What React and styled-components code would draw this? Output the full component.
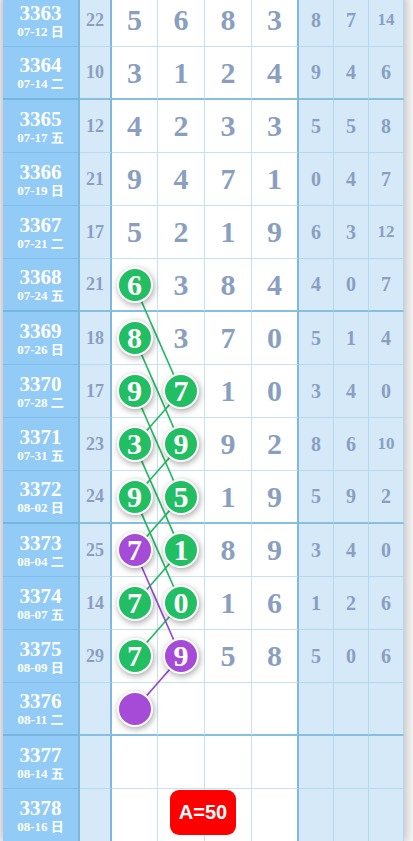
import React from "react";
import styled, { createGlobalStyle } from "styled-components";

const ROW_H = 53;
const COLS = [77, 32, 46, 47, 47, 47, 35, 35, 35];

const GlobalStyle = createGlobalStyle`
  html, body {
    margin: 0;
    padding: 0;
    background: #f4f4f4;
    overflow: hidden;
  }
  body {
    font-family: "Liberation Serif", "Noto Sans CJK SC", serif;
  }
`;

const rows = [
  { no: 3363, date: "07-12 日", sum: 22, big: [5, 6, 8, 3], small: [8, 7, 14] },
  { no: 3364, date: "07-14 二", sum: 10, big: [3, 1, 2, 4], small: [9, 4, 6] },
  { no: 3365, date: "07-17 五", sum: 12, big: [4, 2, 3, 3], small: [5, 5, 8] },
  { no: 3366, date: "07-19 日", sum: 21, big: [9, 4, 7, 1], small: [0, 4, 7] },
  { no: 3367, date: "07-21 二", sum: 17, big: [5, 2, 1, 9], small: [6, 3, 12] },
  { no: 3368, date: "07-24 五", sum: 21, big: [{ v: 6, c: "g" }, 3, 8, 4], small: [4, 0, 7] },
  { no: 3369, date: "07-26 日", sum: 18, big: [{ v: 8, c: "g" }, 3, 7, 0], small: [5, 1, 4] },
  { no: 3370, date: "07-28 二", sum: 17, big: [{ v: 9, c: "g" }, { v: 7, c: "g" }, 1, 0], small: [3, 4, 0] },
  { no: 3371, date: "07-31 五", sum: 23, big: [{ v: 3, c: "g" }, { v: 9, c: "g" }, 9, 2], small: [8, 6, 10] },
  { no: 3372, date: "08-02 日", sum: 24, big: [{ v: 9, c: "g" }, { v: 5, c: "g" }, 1, 9], small: [5, 9, 2] },
  { no: 3373, date: "08-04 二", sum: 25, big: [{ v: 7, c: "p" }, { v: 1, c: "g" }, 8, 9], small: [3, 4, 0] },
  { no: 3374, date: "08-07 五", sum: 14, big: [{ v: 7, c: "g" }, { v: 0, c: "g" }, 1, 6], small: [1, 2, 6] },
  { no: 3375, date: "08-09 日", sum: 29, big: [{ v: 7, c: "g" }, { v: 9, c: "p" }, 5, 8], small: [5, 0, 6] },
  { no: 3376, date: "08-11 二", sum: "", big: [{ v: "", c: "p" }, "", "", ""], small: ["", "", ""] },
  { no: 3377, date: "08-14 五", sum: "", big: ["", "", "", ""], small: ["", "", ""] },
  { no: 3378, date: "08-16 日", sum: "", big: ["", "", "", ""], small: ["", "", ""] },
];

// [fromRow, fromCol, toRow, toCol, colour]
const links = [
  [5, 0, 7, 1, "g"],
  [6, 0, 8, 1, "g"],
  [7, 0, 9, 1, "g"],
  [7, 1, 8, 0, "g"],
  [8, 1, 9, 0, "g"],
  [8, 0, 10, 1, "g"],
  [9, 1, 10, 0, "g"],
  [9, 0, 11, 1, "g"],
  [10, 1, 11, 0, "g"],
  [11, 1, 12, 0, "g"],
  [10, 0, 12, 1, "p"],
  [12, 1, 13, 0, "p"],
];

const colCenter = (c) => {
  let x = COLS[0] + COLS[1];
  for (let i = 0; i < c; i++) x += COLS[2 + i];
  return x + COLS[2 + c] / 2 - 0.5;
};
const rowCenter = (r) => r * ROW_H + ROW_H / 2;

const lineColor = { g: "#22b862", p: "#9447cf" };

const App = () => {
  return (
    <>
      <GlobalStyle />
      <Table>
        <Lines width={401} height={rows.length * ROW_H}>
          {links.map(([r1, c1, r2, c2, col], i) => (
            <line
              key={i}
              x1={colCenter(c1)}
              y1={rowCenter(r1)}
              x2={colCenter(c2)}
              y2={rowCenter(r2)}
              stroke={lineColor[col]}
              strokeWidth="1.7"
            />
          ))}
        </Lines>
        {rows.map((row) => {
          const thick = row.no % 4 === 0;
          return (
            <Row key={row.no}>
              <IssueCell $thick={thick}>
                <IssueNo>{row.no}</IssueNo>
                <IssueDate>{row.date}</IssueDate>
              </IssueCell>
              <SumCell $thick={thick}>{row.sum}</SumCell>
              {row.big.map((b, i) => (
                <BigCell key={i} $thick={thick} $last={i === 3}>
                  {typeof b === "object" ? <Ball $color={b.c}>{b.v}</Ball> : b}
                </BigCell>
              ))}
              {row.small.map((s, i) => (
                <SmallCell key={i} $thick={thick} $small={String(s).length > 1}>
                  {s}
                </SmallCell>
              ))}
            </Row>
          );
        })}
      </Table>
      <Badge>A=50</Badge>
    </>
  );
};

const Table = styled.div`
  position: relative;
  width: 401px;
  margin: -6px 0 0 3px;
  box-shadow: 0 0 10px rgba(0, 0, 0, 0.3);
`;

const Lines = styled.svg`
  position: absolute;
  top: 0;
  left: 0;
  z-index: 1;
  pointer-events: none;
`;

const Row = styled.div`
  display: grid;
  grid-template-columns: ${COLS.map((c) => c + "px").join(" ")};
  height: ${ROW_H}px;
`;

const BaseCell = styled.div`
  box-sizing: border-box;
  display: flex;
  align-items: center;
  justify-content: center;
  font-weight: bold;
  color: #8a9fc0;
`;

const IssueCell = styled(BaseCell)`
  flex-direction: column;
  background: #92cbf6;
  color: #ffffff;
  border-right: 2px solid #7cb6dc;
  border-bottom: ${(p) => (p.$thick ? "2px solid #78b5dc" : "1px solid #80bde6")};
  padding-top: 1px;
`;

const IssueNo = styled.div`
  font-size: 21px;
  line-height: 21px;
`;

const IssueDate = styled.div`
  font-size: 13px;
  line-height: 15px;
  white-space: pre;
  font-family: "Liberation Serif", "Noto Sans CJK SC", serif;
`;

const SumCell = styled(BaseCell)`
  background: #d5e9f9;
  font-size: 18px;
  border-right: 2px solid #7fb8dc;
  border-bottom: ${(p) => (p.$thick ? "2px solid #86bfe0" : "1px solid #b9dbef")};
`;

const BigCell = styled(BaseCell)`
  position: relative;
  background: #ffffff;
  font-size: 30px;
  border-right: ${(p) => (p.$last ? "2px solid #80b9dd" : "1px solid #c6e2f2")};
  border-bottom: ${(p) => (p.$thick ? "2px solid #86bfe0" : "1px solid #c6e2f2")};
`;

const SmallCell = styled(BaseCell)`
  background: #d5e9f9;
  font-size: ${(p) => (p.$small ? "17px" : "20px")};
  border-right: 1px solid #b4d8ee;
  border-bottom: ${(p) => (p.$thick ? "2px solid #86bfe0" : "1px solid #b4d8ee")};
`;

const Ball = styled.div`
  position: relative;
  z-index: 2;
  box-sizing: border-box;
  width: 36px;
  height: 36px;
  border-radius: 50%;
  border: 2px solid #ffffff;
  background: ${(p) => (p.$color === "p" ? "#a64ad8" : "#22be63")};
  box-shadow: 1px 2px 6px rgba(0, 0, 0, 0.35);
  color: #ffffff;
  font-size: 30px;
  line-height: 32px;
  text-align: center;
`;

const Badge = styled.div`
  position: fixed;
  left: 170px;
  bottom: 6px;
  width: 66px;
  height: 45px;
  border-radius: 9px;
  background: #ff0000;
  color: #ffffff;
  font-family: "Liberation Sans", Arial, sans-serif;
  font-weight: bold;
  font-size: 20px;
  display: flex;
  align-items: center;
  justify-content: center;
  z-index: 5;
`;

export default App;
